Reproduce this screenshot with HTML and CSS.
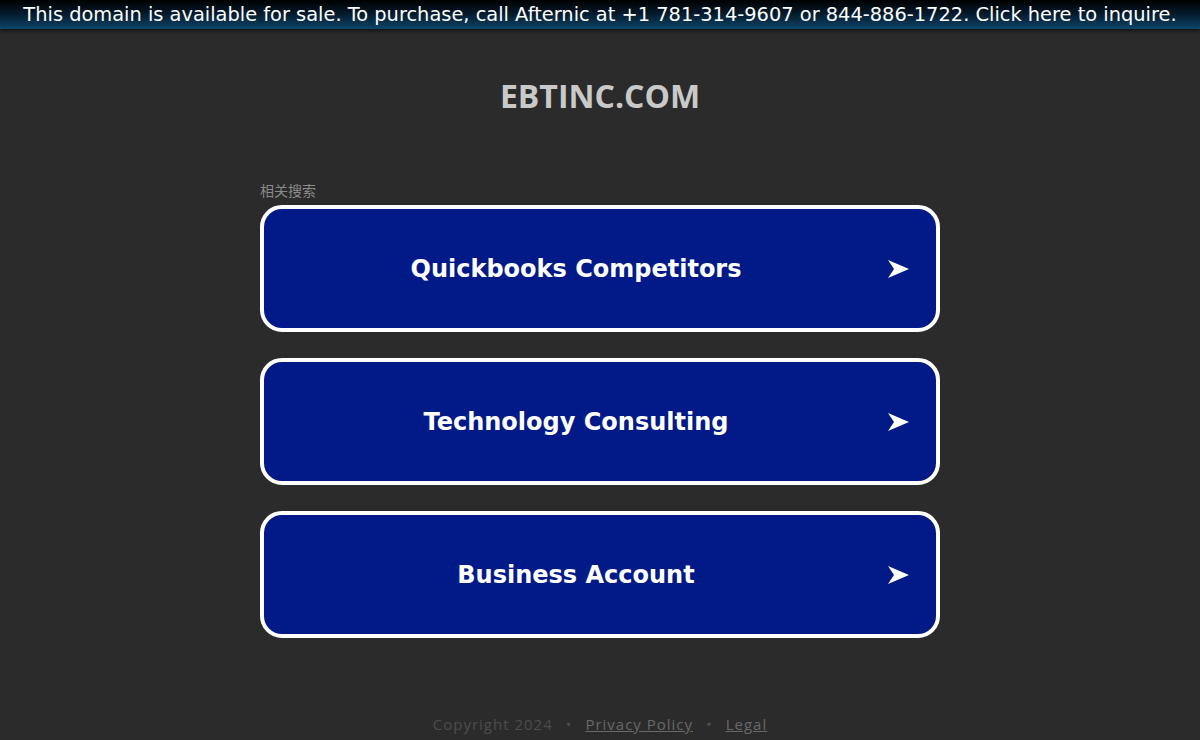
FILE: index.html
```html
<!DOCTYPE html>
<html lang="en">
<head>
<meta charset="utf-8">
<title>ebtinc.com</title>
<link rel="stylesheet" href="styles.css">
</head>
<body>
<div class="banner">This domain is available for sale. To purchase, call Afternic at +1 781-314-9607 or 844-886-1722. Click here to inquire.</div>
<main class="content">
  <h1 class="domain">EBTINC.COM</h1>
  <section class="related">
    <div class="related-label">相关搜索</div>
    <a class="link-btn" href="#"><span class="link-text">Quickbooks Competitors</span><span class="arrow"><svg width="21" height="18" viewBox="0 0 21 18"><polygon points="0,0 21,9 0,18 6,9" fill="#fff"/></svg></span></a>
    <a class="link-btn" href="#"><span class="link-text">Technology Consulting</span><span class="arrow"><svg width="21" height="18" viewBox="0 0 21 18"><polygon points="0,0 21,9 0,18 6,9" fill="#fff"/></svg></span></a>
    <a class="link-btn" href="#"><span class="link-text">Business Account</span><span class="arrow"><svg width="21" height="18" viewBox="0 0 21 18"><polygon points="0,0 21,9 0,18 6,9" fill="#fff"/></svg></span></a>
  </section>
</main>
<footer class="footer">
  <span class="copy">Copyright 2024</span><span class="dot">•</span><a href="#">Privacy Policy</a><span class="dot">•</span><a href="#">Legal</a>
</footer>
</body>
</html>
```
FILE: styles.css
```css
html, body {
  margin: 0;
  padding: 0;
  height: 100%;
}
body {
  background: #2b2b2b;
  font-family: "DejaVu Sans", Verdana, sans-serif;
  display: flex;
  flex-direction: column;
  overflow: hidden;
}
.banner {
  height: 29px;
  line-height: 29px;
  text-align: center;
  color: #ffffff;
  font-size: 19.4px;
  background: linear-gradient(to bottom, #000000 0%, #04192a 45%, #0c4468 100%);
  box-shadow: 0 2px 4px rgba(0,0,0,0.6);
  white-space: nowrap;
}
.content {
  display: flex;
  flex-direction: column;
  align-items: center;
  flex: 1;
}
.domain {
  margin: 49px 0 0;
  font-family: "Open Sans", sans-serif;
  font-weight: 700;
  font-size: 32px;
  color: #c9c9c9;
  line-height: 36px;
}
.related {
  width: 680px;
  margin-top: 67px;
  display: flex;
  flex-direction: column;
}
.related-label {
  font-family: "Noto Sans CJK SC", sans-serif;
  font-size: 14px;
  color: #8a8a8a;
  line-height: 18px;
  margin-bottom: 6px;
}
.link-btn {
  display: flex;
  align-items: center;
  height: 119px;
  border: 4px solid #ffffff;
  border-radius: 22px;
  background: #021a87;
  margin-bottom: 26px;
  text-decoration: none;
  color: #ffffff;
}
.link-text {
  flex: 1;
  text-align: center;
  font-weight: 700;
  font-size: 24px;
}
.arrow {
  width: 48px;
  display: flex;
  align-items: center;
}
.arrow svg {
  display: block;
}
.footer {
  text-align: center;
  font-family: "Open Sans", sans-serif;
  font-size: 15px;
  letter-spacing: 1px;
  color: #4d4d4d;
  padding-bottom: 6px;
  line-height: 20px;
}
.footer a {
  color: #686868;
  text-decoration: underline;
}
.dot {
  margin: 0 13px;
}
```
